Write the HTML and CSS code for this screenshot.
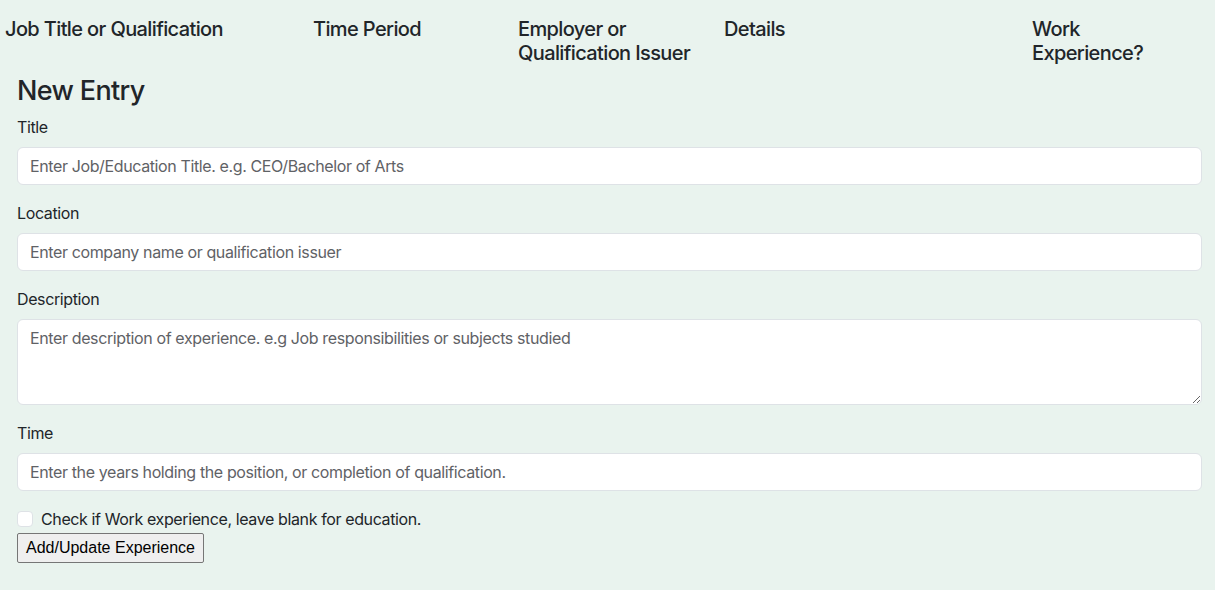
FILE: index.html
```html
<!DOCTYPE html>
<html lang="en">
<head>
<meta charset="utf-8">
<title>Experience</title>
<link rel="stylesheet" href="styles.css">
</head>
<body>
<div class="page">
  <div class="head-row">
    <div class="head-cell">Job Title or Qualification</div>
    <div class="head-cell">Time Period</div>
    <div class="head-cell">Employer or<br>Qualification Issuer</div>
    <div class="head-cell">Details</div>
    <div class="head-cell">Work<br>Experience?</div>
  </div>
  <form class="entry-form">
    <h3 class="form-title">New Entry</h3>
    <div class="field">
      <label class="field-label" for="title">Title</label>
      <input class="control" id="title" type="text" placeholder="Enter Job/Education Title. e.g. CEO/Bachelor of Arts">
    </div>
    <div class="field">
      <label class="field-label" for="loc">Location</label>
      <input class="control" id="loc" type="text" placeholder="Enter company name or qualification issuer">
    </div>
    <div class="field">
      <label class="field-label" for="desc">Description</label>
      <textarea class="control control-area" id="desc" rows="3" placeholder="Enter description of experience. e.g Job responsibilities or subjects studied"></textarea>
    </div>
    <div class="field">
      <label class="field-label" for="time">Time</label>
      <input class="control" id="time" type="text" placeholder="Enter the years holding the position, or completion of qualification.">
    </div>
    <div class="check-row">
      <input class="check-box" id="work" type="checkbox">
      <label class="check-label" for="work">Check if Work experience, leave blank for education.</label>
    </div>
    <button class="submit-btn" type="button">Add/Update Experience</button>
  </form>
</div>
</body>
</html>
```

FILE: styles.css
```css
* { box-sizing: border-box; }

html, body {
  margin: 0;
  padding: 0;
  background: #e9f3ee;
}

body {
  font-family: Inter, "Liberation Sans", sans-serif;
  font-size: 16px;
  line-height: 24px;
  letter-spacing: -0.38px;
  color: #212529;
  width: 1215px;
  height: 590px;
  overflow: hidden;
}

.page {
  padding-top: 17px;
}

.head-row {
  display: grid;
  grid-template-columns: 308px 205px 206px 308px 1fr;
  padding-left: 5px;
}

.head-cell {
  font-size: 20px;
  font-weight: 500;
  line-height: 24px;
  letter-spacing: -0.62px;
}

.entry-form {
  padding: 9px 13px 0 17px;
}

.form-title {
  margin: 0 0 7px;
  font-size: 27px;
  font-weight: 500;
  line-height: 33.6px;
  letter-spacing: -0.65px;
}

.field {
  margin-bottom: 16px;
}

.field-label {
  display: block;
  margin-bottom: 8px;
  font-size: 16px;
  line-height: 24px;
}

.control {
  display: block;
  width: 100%;
  height: 38px;
  padding: 6px 12px;
  font-family: inherit;
  font-size: 16px;
  line-height: 24px;
  letter-spacing: -0.38px;
  color: #212529;
  background: #fff;
  border: 1px solid #dee2e6;
  border-radius: 6px;
  outline: none;
}

.control-area {
  height: 86px;
  resize: vertical;
}

.control::placeholder {
  color: #5f6266;
  opacity: 1;
}

.check-row {
  display: flex;
  align-items: flex-start;
  gap: 8px;
  min-height: 24px;
  margin-bottom: 2px;
}

.check-box {
  appearance: none;
  -webkit-appearance: none;
  width: 16px;
  height: 16px;
  margin: 4px 0 0;
  background: #fff;
  border: 1px solid #dee2e6;
  border-radius: 4px;
  flex-shrink: 0;
}

.check-label {
  font-size: 16px;
  line-height: 24px;
}

.submit-btn {
  font-family: "Liberation Sans", Arial, sans-serif;
  font-size: 16px;
  line-height: 24px;
  letter-spacing: 0;
  color: #000;
  padding: 2px 8px;
  background: #efefef;
  border: 1px solid #767676;
  border-radius: 2px;
}
```
